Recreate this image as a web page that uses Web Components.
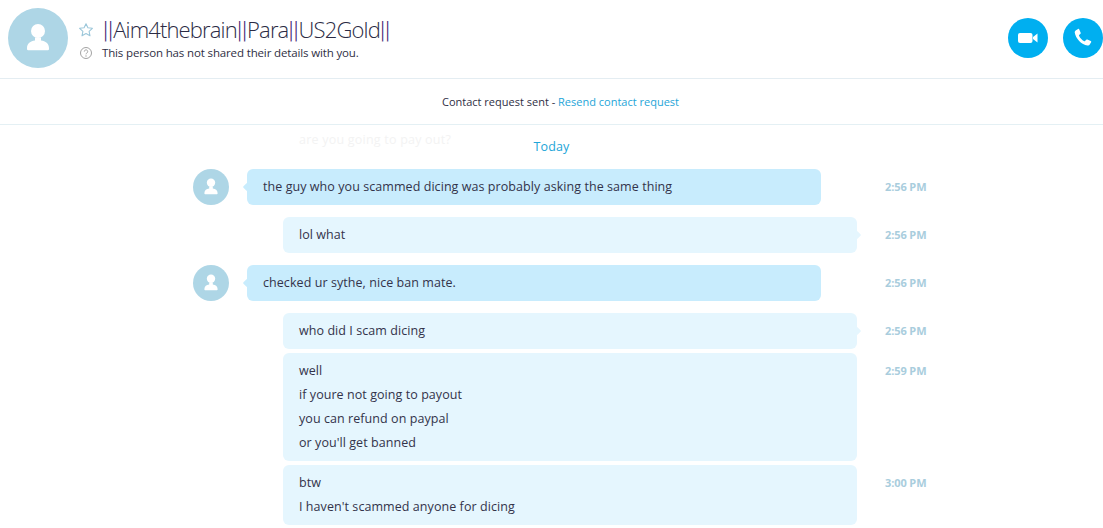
<!DOCTYPE html>
<html><head><meta charset="utf-8"><title>Chat</title>
<style>
html,body{margin:0;height:100%;overflow:hidden;background:#fff}
body{font-family:"Open Sans","Noto Sans",sans-serif;color:#3a3a4a;display:flex;flex-direction:column;height:528px}
</style></head><body>
<chat-header name="||Aim4thebrain||Para||US2Gold||" note="This person has not shared their details with you."></chat-header>
<request-banner></request-banner>
<chat-log>
<day-divider ghost="are you going to pay out?">Today</day-divider>
<chat-message who="them" time="2:56 PM">the guy who you scammed dicing was probably asking the same thing</chat-message>
<chat-message who="me" time="2:56 PM" tail>lol what</chat-message>
<chat-message who="them" time="2:56 PM">checked ur sythe, nice ban mate.</chat-message>
<chat-message who="me" time="2:56 PM" tail>who did I scam dicing</chat-message>
<chat-message who="me" time="2:59 PM" cont><div>well</div><div>if youre not going to payout</div><div>you can refund on paypal</div><div>or you'll get banned</div></chat-message>
<chat-message who="me" time="3:00 PM" cont><div>btw</div><div>I haven't scammed anyone for dicing</div></chat-message>
</chat-log>
<script>
const PERSON='<circle cx="30" cy="23" r="7" fill="#fff"/><path d="M19 40c0-4.500 3.500-7 8-7.500v-3h6v3c4.500.5 8 3 8 7.500v1a1.200 1.200 0 0 1-1.200 1.200H20.200A1.200 1.200 0 0 1 19 41z" fill="#fff"/>';
class ChatHeader extends HTMLElement{
  connectedCallback(){
    const s=this.attachShadow({mode:'open'});
    const name=this.getAttribute('name').replace(/\|\|/g,'<span class="p">||</span>');
    s.innerHTML=`<style>
    :host{display:flex;align-items:center;height:76px;border-bottom:1px solid #e4edf2;padding:0 0 2px 8px;flex:none;box-sizing:content-box}
    .av{width:60px;height:60px;border-radius:50%;background:#aed6e6;flex:none}
    .av svg{width:60px;height:60px}
    .info{margin-left:10px;flex:1;display:grid;grid-template-columns:16px 1fr;column-gap:9px;align-items:center;grid-template-rows:29px 16px}
    .name{font-weight:300;font-size:22px;line-height:30px;color:#2b2b44;letter-spacing:-.85px;white-space:nowrap}
    .p{font-family:Roboto,sans-serif;font-weight:300;font-size:23px;letter-spacing:0;color:#4a2f78}
    .note{font-size:11.500px;line-height:16px;color:#2f2f44;letter-spacing:-.14px;white-space:nowrap;margin-left:-1px}
    .actions{display:flex;gap:15px}
    .btn{width:40px;height:40px;border-radius:50%;background:#00aff0;display:flex;align-items:center;justify-content:center}
    svg{display:block}
    </style>
    <div class="av"><svg viewBox="0 0 60 60">${PERSON}</svg></div>
    <div class="info">
      <svg width="16" height="16" viewBox="0 0 16 16"><path d="M8 1.700l1.900 4.100 4.500.5-3.300 3 .9 4.500L8 11.600l-4 2.200.9-4.500-3.300-3 4.500-.5z" fill="none" stroke="#9cc7da" stroke-width="1.100" stroke-linejoin="round"/></svg>
      <div class="name">${name}</div>
      <svg width="14" height="14" viewBox="0 0 14 14" style="margin-left:1px"><circle cx="7" cy="7" r="5.500" fill="none" stroke="#a3a3a3" stroke-width="1"/><path d="M5.300 5.600a1.700 1.700 0 1 1 2.600 1.400c-.6.400-.9.700-.9 1.300" fill="none" stroke="#a3a3a3" stroke-width="1"/><circle cx="7" cy="10" r=".7" fill="#a3a3a3"/></svg>
      <div class="note">${this.getAttribute('note')}</div>
    </div>
    <div class="actions">
      <div class="btn"><svg width="20" height="10" viewBox="0 0 20 10"><rect x="0" y="0" width="14.500" height="10" rx="2" fill="#fff"/><path d="M15 4 19.500 .5v9L15 6z" fill="#fff"/></svg></div>
      <div class="btn"><svg width="22" height="22" viewBox="0 0 20 20"><path d="M3.300 3.100 5.500 1.800c.5-.2.900-.1 1.100.4l1.300 3c.2.400.1.700-.2 1L6.500 7.300c-.2.200-.2.400-.1.600.9 2.100 2.500 3.800 4.800 5 .2.100.4.100.6-.1l1.200-1.200c.3-.3.600-.4 1-.2l3 1.300c.5.200.6.700.4 1.100l-1.300 2.200c-.4.600-1.200 1-2 .9C8.600 16.200 3.300 10.600 2.500 5.100c-.1-.8.200-1.600.8-2z" fill="#fff"/></svg></div>
    </div>`;
  }
}
class RequestBanner extends HTMLElement{
  connectedCallback(){
    this.attachShadow({mode:'open'}).innerHTML=`<style>
    :host{display:flex;align-items:center;justify-content:center;height:45px;border-bottom:1px solid #e4f0f4;flex:none;font-size:11px;color:#2f2f44;letter-spacing:0;padding-left:18px}
    a{color:#1ea5d8;text-decoration:none}
    span{white-space:pre}
    </style><span>Contact request sent - <a>Resend contact request</a></span>`;
  }
}
class ChatLog extends HTMLElement{
  connectedCallback(){
    this.attachShadow({mode:'open'}).innerHTML=`<style>
    :host{display:flex;flex-direction:column;flex:1;min-height:0;overflow:hidden;padding-top:12px;box-sizing:border-box}
    </style><slot></slot>`;
  }
}
class DayDivider extends HTMLElement{
  connectedCallback(){
    this.attachShadow({mode:'open'}).innerHTML=`<style>
    :host{display:block;position:relative;text-align:center;height:20px;font-size:12.500px;line-height:20px;color:#22a5d8;letter-spacing:.1px}
    .ghost{position:absolute;left:299px;top:-7px;color:#f3f3f3;white-space:nowrap;letter-spacing:.22px}
    .t{position:relative}
    </style><div class="ghost">${this.getAttribute('ghost')}</div><span class="t"><slot></slot></span>`;
  }
}
class ChatMessage extends HTMLElement{
  connectedCallback(){
    const them=this.getAttribute('who')==='them';
    const cont=this.hasAttribute('cont');
    const s=this.attachShadow({mode:'open'});
    s.innerHTML=`<style>
    :host{display:grid;grid-template-columns:193px 36px 18px 610px 28px auto;width:1103px;margin-top:${cont?4:12}px;font-size:12.500px;line-height:24px;letter-spacing:.065px;color:#33334a;flex:none}
    .av{grid-column:2;width:36px;height:36px;border-radius:50%;background:#aed6e6}
    .av svg{width:36px;height:36px;display:block}
    .b{grid-column:4;position:relative;border-radius:6px;padding:6px 16px;${them?'background:#c8ecfd;width:574px;box-sizing:border-box':'background:#e5f6fe;width:574px;box-sizing:border-box;margin-left:36px'}}
    .b.tail-l::before,.b.tail-r::after{content:"";position:absolute;top:15px;width:6px;height:6px;transform:rotate(45deg);border-radius:1px}
    .b.tail-l::before{left:-3px;background:#c8ecfd}
    .b.tail-r::after{right:-3px;background:#e5f6fe}
    .t{grid-column:6;font-size:11px;font-weight:700;color:#a9cddd;line-height:36px;white-space:nowrap;letter-spacing:-.1px}
    </style>
    ${them?`<div class="av"><svg viewBox="0 0 60 60">${PERSON}</svg></div>`:''}
    <div class="b ${them?'tail-l':(this.hasAttribute('tail')?'tail-r':'')}"><slot></slot></div>
    <div class="t">${this.getAttribute('time')}</div>`;
  }
}
customElements.define('chat-header',ChatHeader);
customElements.define('request-banner',RequestBanner);
customElements.define('chat-log',ChatLog);
customElements.define('day-divider',DayDivider);
customElements.define('chat-message',ChatMessage);
</script>
</body></html>
